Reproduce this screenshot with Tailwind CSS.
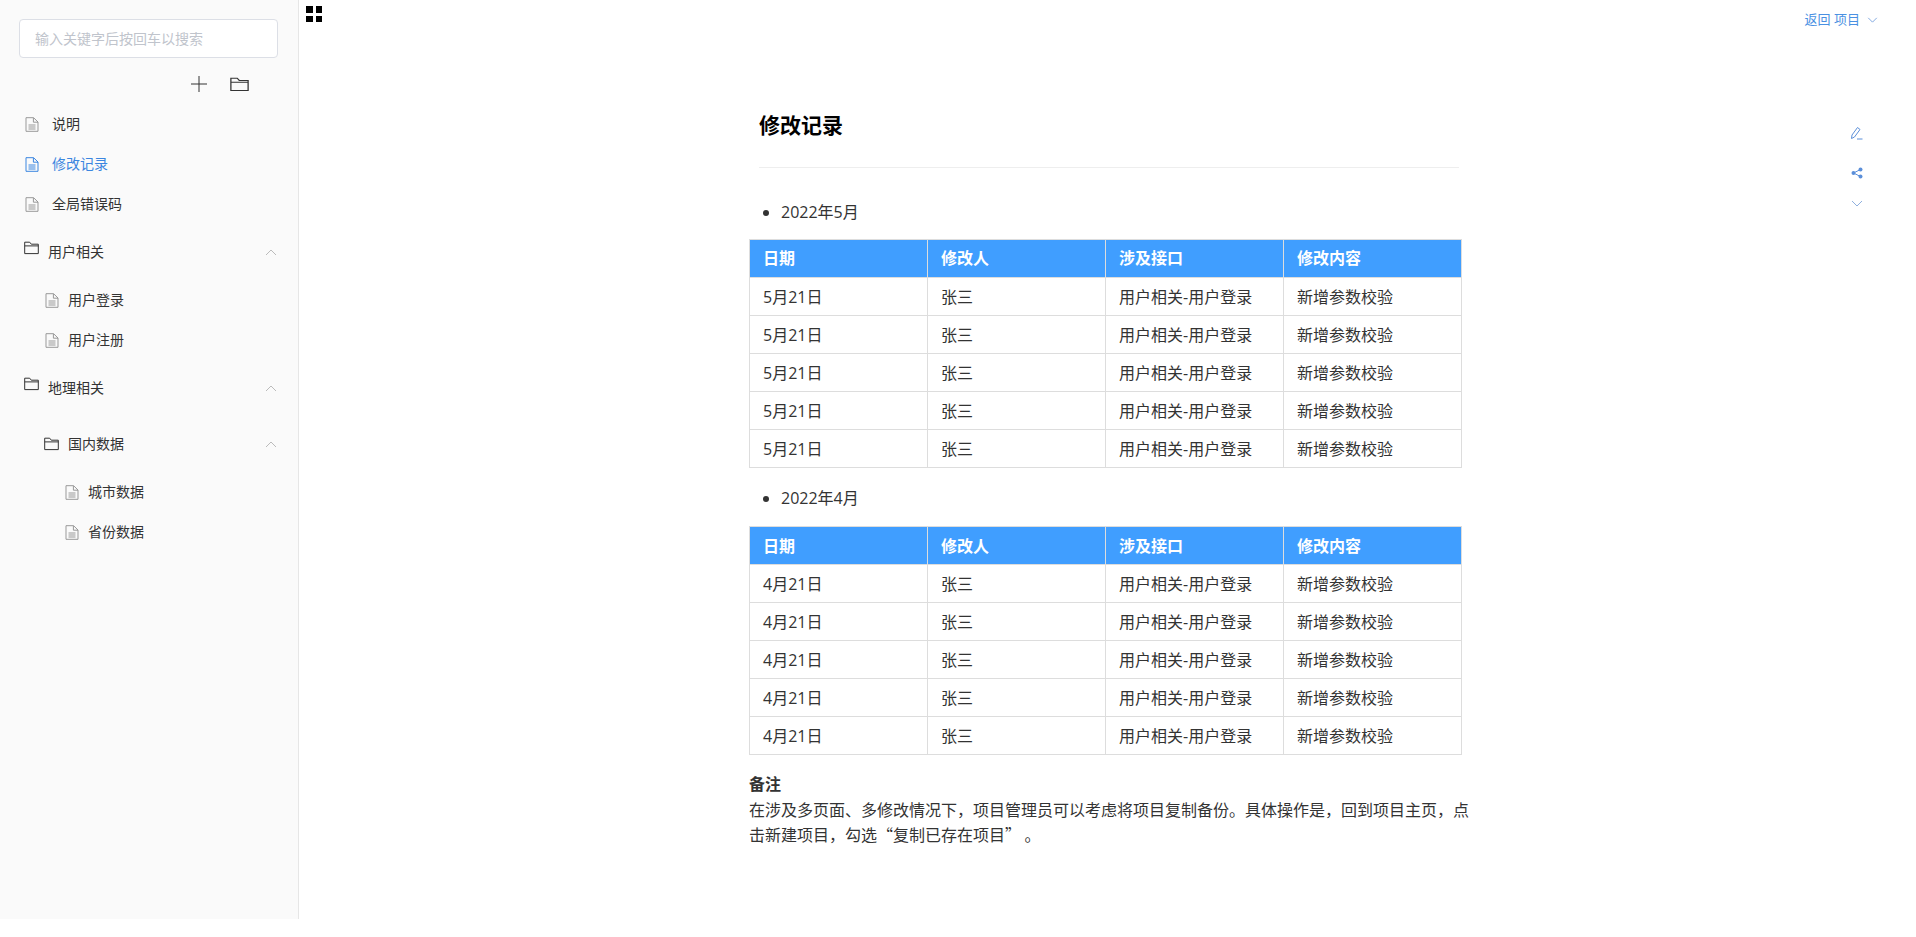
<!DOCTYPE html>
<html lang="zh-CN">
<head>
  <meta charset="UTF-8" />
  <title>修改记录</title>
  <script src="https://cdn.jsdelivr.net/npm/@tailwindcss/browser@4"></script>
</head>
<body class="bg-white text-[#333] font-['Open_Sans','Noto_Sans_CJK_SC',sans-serif] overflow-hidden">
  <svg class="hidden">
    <symbol id="doc" viewBox="0 0 14 15"><path d="M1 .7h7.6L13 5v9.3H1zM8.4.9v4.3H13M3.5 8h7M3.5 10h7M3.5 12h7" fill="none" stroke="currentColor"/></symbol>
    <symbol id="folder" viewBox="0 0 15 14"><path d="M.7 12.6V1.2h5l1.6 2h7v9.4zM.7 4.9h13.6" fill="none" stroke="currentColor"/></symbol>
    <symbol id="up" viewBox="0 0 12 7"><path d="M1 6l5-5 5 5" fill="none" stroke="currentColor"/></symbol>
  </svg>

  <div class="relative flex h-[937px] items-start">
    <!-- Sidebar -->
    <aside class="w-[299px] h-[919px] shrink-0 bg-[#fafafa] border-r border-[#e6e6e6] text-sm">
      <div class="pl-[19px] pt-[19px]">
        <input placeholder="输入关键字后按回车以搜索" class="w-[259px] h-[39px] px-[15px] bg-white border border-[#dcdfe6] rounded text-sm placeholder:text-[#c0c4cc]" />
      </div>
      <div class="flex items-center h-[46px] pt-[6px] pl-[190px] gap-[22px] text-[#333]">
        <svg class="w-[18px] h-[18px]" viewBox="0 0 18 18"><path d="M9 1v16M1 9h16" stroke="currentColor" fill="none"/></svg>
        <svg class="w-[19px] h-[15px]" viewBox="0 0 15 14" preserveAspectRatio="none"><use href="#folder"/></svg>
      </div>

      <a class="flex items-center h-10 pl-[25px]"><svg class="w-[14px] h-[15px] mr-[13px] text-[#999]"><use href="#doc"/></svg>说明</a>
      <a class="flex items-center h-10 pl-[25px] text-[#3b86e0]"><svg class="w-[14px] h-[15px] mr-[13px]"><use href="#doc"/></svg>修改记录</a>
      <a class="flex items-center h-10 pl-[25px]"><svg class="w-[14px] h-[15px] mr-[13px] text-[#999]"><use href="#doc"/></svg>全局错误码</a>

      <div class="flex items-center h-14 pl-[24px] pr-[21px]"><svg class="w-[15px] h-[14px] mr-[9px] mb-2"><use href="#folder"/></svg>用户相关<svg class="w-[12px] h-[7px] ml-auto text-[#bbb]"><use href="#up"/></svg></div>
      <a class="flex items-center h-10 pl-[45px]"><svg class="w-[14px] h-[15px] mr-[9px] text-[#999]"><use href="#doc"/></svg>用户登录</a>
      <a class="flex items-center h-10 pl-[45px]"><svg class="w-[14px] h-[15px] mr-[9px] text-[#999]"><use href="#doc"/></svg>用户注册</a>

      <div class="flex items-center h-14 pl-[24px] pr-[21px]"><svg class="w-[15px] h-[14px] mr-[9px] mb-2"><use href="#folder"/></svg>地理相关<svg class="w-[12px] h-[7px] ml-auto text-[#bbb]"><use href="#up"/></svg></div>
      <div class="flex items-center h-14 pl-[44px] pr-[21px]"><svg class="w-[15px] h-[14px] mr-[9px]"><use href="#folder"/></svg>国内数据<svg class="w-[12px] h-[7px] ml-auto text-[#bbb]"><use href="#up"/></svg></div>
      <a class="flex items-center h-10 pl-[65px]"><svg class="w-[14px] h-[15px] mr-[9px] text-[#999]"><use href="#doc"/></svg>城市数据</a>
      <a class="flex items-center h-10 pl-[65px]"><svg class="w-[14px] h-[15px] mr-[9px] text-[#999]"><use href="#doc"/></svg>省份数据</a>
    </aside>

    <!-- Page content -->
    <main class="flex-1 min-w-0">
      <div class="flex justify-between items-start h-[100px]">
        <div class="grid grid-cols-2 gap-[3px] w-[16px] ml-[7px] mt-[6px]">
          <span class="h-[6.5px] bg-black"></span><span class="h-[6.5px] bg-black"></span>
          <span class="h-[6.5px] bg-black"></span><span class="h-[6.5px] bg-black"></span>
        </div>
        <div class="flex items-center h-[19px] mt-[10px] pr-[38px] text-[13px] text-[#4a90e2]">
          返回 项目
          <svg class="w-[11px] h-[6px] ml-[7px] text-[#6f9bdc]" viewBox="0 0 12 7"><path d="M1 1l5 5 5-5" fill="none" stroke="currentColor"/></svg>
        </div>
      </div>

      <div class="ml-[450px] w-[720px] text-base leading-[25.6px]">
        <h1 class="ml-[10px] w-[700px] h-[68px] pt-[10px] border-b border-[#eee] text-[21px] leading-[30px] font-bold text-black">修改记录</h1>

        <ul class="list-disc pl-[32px] mt-[32px] mb-[13px]"><li>2022年5月</li></ul>
        <table class="w-[713px] table-fixed border-collapse">
          <thead>
            <tr class="h-[38px] bg-[#409eff] text-white font-bold text-left">
              <th class="border border-[#ddd] px-[13px] pt-[2px]">日期</th><th class="border border-[#ddd] px-[13px] pt-[2px]">修改人</th><th class="border border-[#ddd] px-[13px] pt-[2px]">涉及接口</th><th class="border border-[#ddd] px-[13px] pt-[2px]">修改内容</th>
            </tr>
          </thead>
          <tbody>
            <tr class="h-[38px]"><td class="border border-[#ddd] px-[13px] pt-[3px]">5月21日</td><td class="border border-[#ddd] px-[13px] pt-[3px]">张三</td><td class="border border-[#ddd] px-[13px] pt-[3px]">用户相关-用户登录</td><td class="border border-[#ddd] px-[13px] pt-[3px]">新增参数校验</td></tr>
            <tr class="h-[38px]"><td class="border border-[#ddd] px-[13px] pt-[3px]">5月21日</td><td class="border border-[#ddd] px-[13px] pt-[3px]">张三</td><td class="border border-[#ddd] px-[13px] pt-[3px]">用户相关-用户登录</td><td class="border border-[#ddd] px-[13px] pt-[3px]">新增参数校验</td></tr>
            <tr class="h-[38px]"><td class="border border-[#ddd] px-[13px] pt-[3px]">5月21日</td><td class="border border-[#ddd] px-[13px] pt-[3px]">张三</td><td class="border border-[#ddd] px-[13px] pt-[3px]">用户相关-用户登录</td><td class="border border-[#ddd] px-[13px] pt-[3px]">新增参数校验</td></tr>
            <tr class="h-[38px]"><td class="border border-[#ddd] px-[13px] pt-[3px]">5月21日</td><td class="border border-[#ddd] px-[13px] pt-[3px]">张三</td><td class="border border-[#ddd] px-[13px] pt-[3px]">用户相关-用户登录</td><td class="border border-[#ddd] px-[13px] pt-[3px]">新增参数校验</td></tr>
            <tr class="h-[38px]"><td class="border border-[#ddd] px-[13px] pt-[3px]">5月21日</td><td class="border border-[#ddd] px-[13px] pt-[3px]">张三</td><td class="border border-[#ddd] px-[13px] pt-[3px]">用户相关-用户登录</td><td class="border border-[#ddd] px-[13px] pt-[3px]">新增参数校验</td></tr>
          </tbody>
        </table>

        <ul class="list-disc pl-[32px] mt-[18px] mb-[15px]"><li>2022年4月</li></ul>
        <table class="w-[713px] table-fixed border-collapse">
          <thead>
            <tr class="h-[38px] bg-[#409eff] text-white font-bold text-left">
              <th class="border border-[#ddd] px-[13px] pt-[2px]">日期</th><th class="border border-[#ddd] px-[13px] pt-[2px]">修改人</th><th class="border border-[#ddd] px-[13px] pt-[2px]">涉及接口</th><th class="border border-[#ddd] px-[13px] pt-[2px]">修改内容</th>
            </tr>
          </thead>
          <tbody>
            <tr class="h-[38px]"><td class="border border-[#ddd] px-[13px] pt-[3px]">4月21日</td><td class="border border-[#ddd] px-[13px] pt-[3px]">张三</td><td class="border border-[#ddd] px-[13px] pt-[3px]">用户相关-用户登录</td><td class="border border-[#ddd] px-[13px] pt-[3px]">新增参数校验</td></tr>
            <tr class="h-[38px]"><td class="border border-[#ddd] px-[13px] pt-[3px]">4月21日</td><td class="border border-[#ddd] px-[13px] pt-[3px]">张三</td><td class="border border-[#ddd] px-[13px] pt-[3px]">用户相关-用户登录</td><td class="border border-[#ddd] px-[13px] pt-[3px]">新增参数校验</td></tr>
            <tr class="h-[38px]"><td class="border border-[#ddd] px-[13px] pt-[3px]">4月21日</td><td class="border border-[#ddd] px-[13px] pt-[3px]">张三</td><td class="border border-[#ddd] px-[13px] pt-[3px]">用户相关-用户登录</td><td class="border border-[#ddd] px-[13px] pt-[3px]">新增参数校验</td></tr>
            <tr class="h-[38px]"><td class="border border-[#ddd] px-[13px] pt-[3px]">4月21日</td><td class="border border-[#ddd] px-[13px] pt-[3px]">张三</td><td class="border border-[#ddd] px-[13px] pt-[3px]">用户相关-用户登录</td><td class="border border-[#ddd] px-[13px] pt-[3px]">新增参数校验</td></tr>
            <tr class="h-[38px]"><td class="border border-[#ddd] px-[13px] pt-[3px]">4月21日</td><td class="border border-[#ddd] px-[13px] pt-[3px]">张三</td><td class="border border-[#ddd] px-[13px] pt-[3px]">用户相关-用户登录</td><td class="border border-[#ddd] px-[13px] pt-[3px]">新增参数校验</td></tr>
          </tbody>
        </table>

        <div class="mt-[16px] font-['Noto_Sans_CJK_SC',sans-serif]"><strong class="block font-bold">备注</strong>
          <p>在涉及多页面、多修改情况下，项目管理员可以考虑将项目复制备份。具体操作是，回到项目主页，点击新建项目，勾选“复制已存在项目” 。</p>
        </div>
      </div>
    </main>

    <!-- Floating doc tools -->
    <div class="absolute right-[53px] top-[126px] flex flex-col items-center text-[#5b8fd9]">
      <svg class="w-[13px] h-[14px]" viewBox="0 0 13 14"><path d="M1.5 12.5l.5-3.5 5.5-7.5 2.5 2-5.5 7.5zM7 13h5.5" fill="none" stroke="currentColor"/></svg>
      <svg class="w-[12px] h-[12px] mt-[27px]" viewBox="0 0 12 12"><path d="M9.5 2.5L2.5 6l7 3.5" fill="none" stroke="currentColor"/><circle cx="2.5" cy="6" r="2" fill="currentColor"/><circle cx="9.5" cy="2.5" r="2" fill="currentColor"/><circle cx="9.5" cy="9.5" r="2" fill="currentColor"/></svg>
      <svg class="w-[12px] h-[7px] mt-[21px] text-[#8fb0de]" viewBox="0 0 12 7"><path d="M1 1l5 5 5-5" fill="none" stroke="currentColor"/></svg>
    </div>
  </div>
</body>
</html>
